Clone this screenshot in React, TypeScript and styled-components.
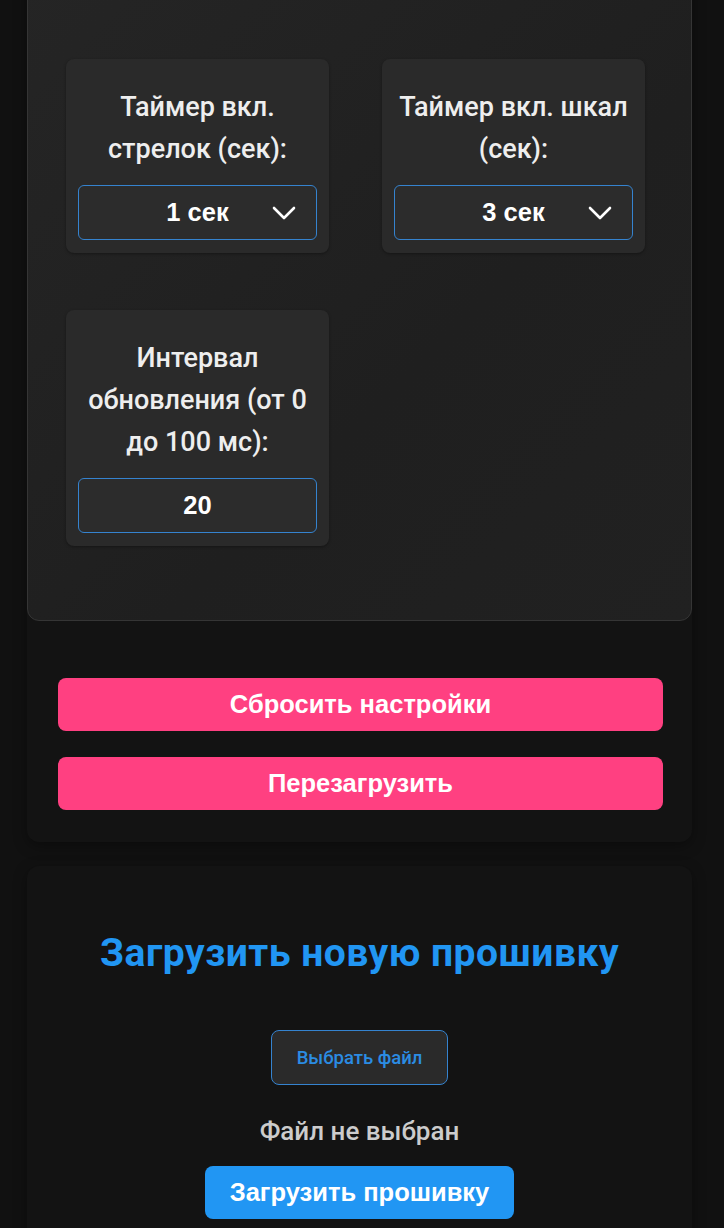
import React from 'react';
import { styled, createGlobalStyle } from 'styled-components';

const GlobalStyle = createGlobalStyle`
    body {
        margin: 0;
        background: #111111;
        font-family: Roboto, 'Noto Sans', sans-serif;
        color: #eee;
    }
`;

const settings = [
    { label: 'Таймер вкл. стрелок (сек):', value: '1 сек', select: true },
    { label: 'Таймер вкл. шкал (сек):', value: '3 сек', select: true },
    { label: 'Интервал обновления (от 0 до 100 мс):', value: '20', select: false },
];

const Chevron = () => (
    <svg width="24" height="14" viewBox="0 0 24 14" fill="none">
        <path d="M2 2 L12 12 L22 2" stroke="#fff" strokeWidth="2.6" strokeLinecap="round" strokeLinejoin="round" />
    </svg>
);

const App = () => {
    return (
        <Page>
            <GlobalStyle />
            <Section>
                <SettingsCard>
                    <SettingsGrid>
                        {settings.map((s) => (
                            <SettingItem key={s.label}>
                                <Label>{s.label}</Label>
                                {s.select ? (
                                    <SelectBox>
                                        <span />
                                        <FieldText>{s.value}</FieldText>
                                        <Chevron />
                                    </SelectBox>
                                ) : (
                                    <NumberInput type="text" defaultValue={s.value} />
                                )}
                            </SettingItem>
                        ))}
                    </SettingsGrid>
                </SettingsCard>
                <Actions>
                    <ActionButton>Сбросить настройки</ActionButton>
                    <ActionButton>Перезагрузить</ActionButton>
                </Actions>
            </Section>
            <FirmwareSection>
                <Heading>Загрузить новую прошивку</Heading>
                <FileButton>Выбрать файл</FileButton>
                <FileName>Файл не выбран</FileName>
                <UploadButton>Загрузить прошивку</UploadButton>
            </FirmwareSection>
        </Page>
    );
};

const Page = styled.div`
    display: flex;
    flex-direction: column;
    gap: 24px;
    padding: 0 32px 40px 27px;
    margin-top: -40px;
`;

const Section = styled.section`
    background: #131313;
    border-radius: 12px;
    box-shadow: 0 4px 14px rgba(0, 0, 0, 0.35);
`;

const SettingsCard = styled.div`
    background: linear-gradient(135deg, #252525 0%, #1f1f1f 60%, #212121 100%);
    border: 1px solid #353535;
    border-radius: 12px;
    padding: 98px 38px 74px;
`;

const SettingsGrid = styled.div`
    display: grid;
    grid-template-columns: repeat(2, 263px);
    column-gap: 53px;
    row-gap: 57px;
    align-items: start;
`;

const SettingItem = styled.div`
    background: #2a2a2a;
    border-radius: 8px;
    padding: 12px 12px 13px;
    box-shadow: 0 1px 3px rgba(0, 0, 0, 0.35);
`;

const Label = styled.label`
    display: block;
    margin: 15px 0;
    font-size: 27px;
    font-weight: 500;
    line-height: 42px;
    text-align: center;
    color: #eee;
`;

const SelectBox = styled.div`
    display: grid;
    grid-template-columns: 1fr auto 1fr;
    align-items: center;
    justify-items: center;
    height: 53px;
    padding: 0 20px;
    border: 1px solid #3583cf;
    border-radius: 6px;
    background: #2c2c2c;
    & > svg {
        justify-self: end;
    }
`;

const FieldText = styled.span`
    font-family: 'Liberation Sans', Arial, sans-serif;
    font-size: 25.5px;
    font-weight: bold;
    color: #fff;
`;

const NumberInput = styled.input`
    box-sizing: border-box;
    width: 100%;
    height: 55px;
    border: 1px solid #3583cf;
    border-radius: 6px;
    background: #2c2c2c;
    font-family: 'Liberation Sans', Arial, sans-serif;
    font-size: 25.5px;
    font-weight: bold;
    color: #fff;
    text-align: center;
    outline: none;
`;

const Actions = styled.div`
    display: flex;
    flex-direction: column;
    gap: 26px;
    padding: 57px 29px 32px 31px;
`;

const ActionButton = styled.button`
    height: 53px;
    border: none;
    border-radius: 8px;
    background: #ff4081;
    color: #fff;
    font-family: 'Liberation Sans', Arial, sans-serif;
    font-size: 25.5px;
    font-weight: bold;
`;

const FirmwareSection = styled(Section)`
    display: flex;
    flex-direction: column;
    align-items: center;
    padding: 30px 30px 40px;
`;

const Heading = styled.h2`
    margin: 34px 0 54px;
    font-size: 39px;
    font-weight: 700;
    line-height: 46px;
    letter-spacing: 0.5px;
    color: #2196f3;
`;

const FileButton = styled.button`
    height: 55px;
    padding: 0 25px;
    border: 1px solid #3583cf;
    border-radius: 8px;
    background: #2a2a2a;
    color: #2b8ce3;
    font-family: Roboto, 'Noto Sans', sans-serif;
    font-size: 18.5px;
    font-weight: 500;
`;

const FileName = styled.p`
    margin: 29px 0 18px;
    font-size: 26px;
    font-weight: 500;
    line-height: 34px;
    color: #ccc;
`;

const UploadButton = styled.button`
    height: 53px;
    padding: 0 25px;
    border: none;
    border-radius: 8px;
    background: #2196f3;
    color: #fff;
    font-family: 'Liberation Sans', Arial, sans-serif;
    font-size: 25.5px;
    font-weight: bold;
`;

export default App;
